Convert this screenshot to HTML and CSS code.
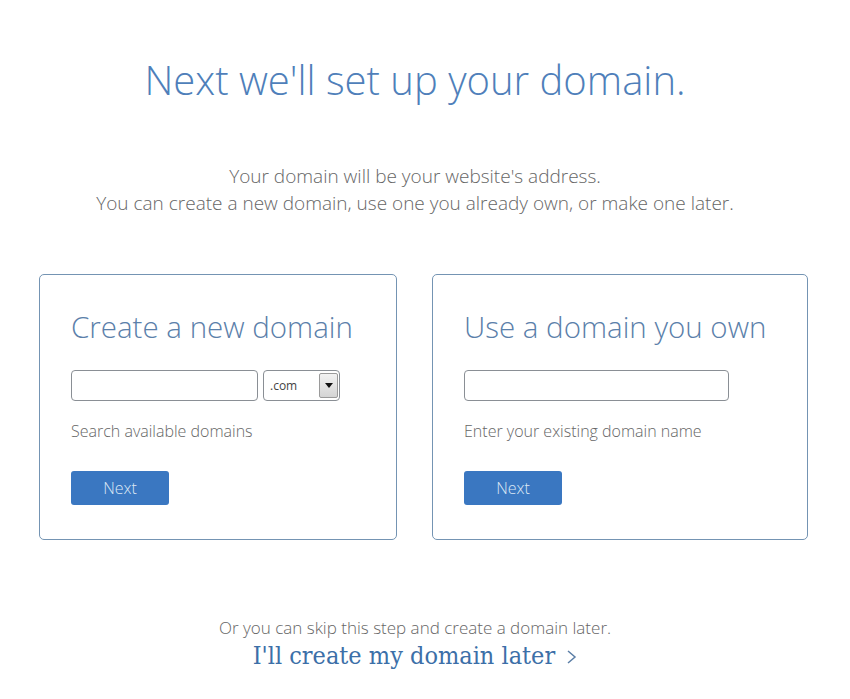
FILE: index.html
```html
<!DOCTYPE html>
<html lang="en">
<head>
    <meta charset="UTF-8">
    <title>Set up your domain</title>
    <link rel="stylesheet" href="styles.css">
</head>
<body>

<div class="page">
    <h1 class="title">Next we'll set up your domain.</h1>

    <p class="intro">
        Your domain will be your website's address.<br>
        You can create a new domain, use one you already own, or make one later.
    </p>

    <div class="cards">
        <!-- 新域名 -->
        <div class="card card-new">
            <h2 class="card-title">Create a new domain</h2>
            <div class="field-row">
                <input class="text-input input-new" type="text">
                <div class="tld-select">
                    <span class="tld-value">.com</span>
                    <span class="tld-arrow"></span>
                </div>
            </div>
            <div class="hint">Search available domains</div>
            <button class="next-btn">Next</button>
        </div>

        <!-- 已有域名 -->
        <div class="card card-own">
            <h2 class="card-title">Use a domain you own</h2>
            <div class="field-row">
                <input class="text-input input-own" type="text">
            </div>
            <div class="hint">Enter your existing domain name</div>
            <button class="next-btn">Next</button>
        </div>
    </div>

    <div class="skip">
        <div class="skip-text">Or you can skip this step and create a domain later.</div>
        <a class="skip-link" href="#">I'll create my domain later
            <svg class="chev" width="11" height="14" viewBox="0 0 11 14"><polyline points="2,1 9,7 2,13" fill="none" stroke="#5b7ea6" stroke-width="1.5"/></svg>
        </a>
    </div>
</div>

</body>
</html>
```

FILE: styles.css
```css
body {
    margin: 0;
    background-color: #fff;
    font-family: 'Open Sans', 'Noto Sans', sans-serif;
    font-weight: 300;
    color: #666;
}

.page {
    width: 830px;
    display: flex;
    flex-direction: column;
    align-items: center;
}

.title {
    margin: 56px 0 0;
    font-size: 40px;
    font-weight: 300;
    line-height: 48px;
    color: #4f7fba;
}

.intro {
    margin: 59px 0 0;
    font-size: 19px;
    line-height: 27px;
    text-align: center;
    color: #666;
}

.cards {
    display: flex;
    gap: 35px;
    margin: 57px 0 0 17px;
}

.card {
    height: 266px;
    box-sizing: border-box;
    border: 1px solid #7494b3;
    border-radius: 5px;
    padding: 31px 31px 0;
}

.card-new {
    width: 358px;
}

.card-own {
    width: 376px;
}

.card-title {
    margin: 0;
    font-size: 29.5px;
    font-weight: 300;
    line-height: 42px;
    color: #5b80aa;
}

.field-row {
    display: flex;
    gap: 5px;
    margin-top: 22px;
}

.text-input {
    height: 31px;
    box-sizing: border-box;
    border: 1px solid #8a8f95;
    border-radius: 4px;
    padding: 0 6px;
    margin: 0;
}

.input-new {
    width: 187px;
}

.input-own {
    width: 265px;
}

.tld-select {
    width: 77px;
    height: 31px;
    box-sizing: border-box;
    border: 1px solid #8a8f95;
    border-radius: 4px;
    display: flex;
    align-items: center;
    justify-content: space-between;
    padding: 2px 1px 2px 6px;
}

.tld-value {
    font-size: 12px;
    font-weight: 400;
    color: #444;
}

.tld-arrow {
    width: 19px;
    height: 25px;
    box-sizing: border-box;
    border: 1px solid #9a9a9a;
    border-radius: 2px;
    background: linear-gradient(#f2f2f2, #d4d4d4);
    position: relative;
}

.tld-arrow::after {
    content: '';
    position: absolute;
    left: 5px;
    top: 9px;
    border-left: 4px solid transparent;
    border-right: 4px solid transparent;
    border-top: 5px solid #111;
}

.hint {
    margin-top: 19px;
    font-size: 16px;
    line-height: 22px;
    color: #666;
}

.next-btn {
    display: block;
    margin-top: 29px;
    width: 98px;
    height: 34px;
    border: none;
    border-radius: 3px;
    background-color: #3a77c1;
    color: #dce8f5;
    font-family: 'Open Sans', sans-serif;
    font-weight: 300;
    font-size: 16px;
    cursor: pointer;
}

.skip {
    margin-top: 76px;
    text-align: center;
}

.skip-text {
    font-size: 17px;
    line-height: 24px;
    color: #666;
}

.skip-link {
    display: inline-block;
    margin-top: 1px;
    font-family: 'DejaVu Serif Condensed', 'DejaVu Serif', serif;
    font-size: 25px;
    line-height: 30px;
    color: #3c6fa8;
    text-decoration: none;
}

.chev {
    margin-left: 4px;
}
```
